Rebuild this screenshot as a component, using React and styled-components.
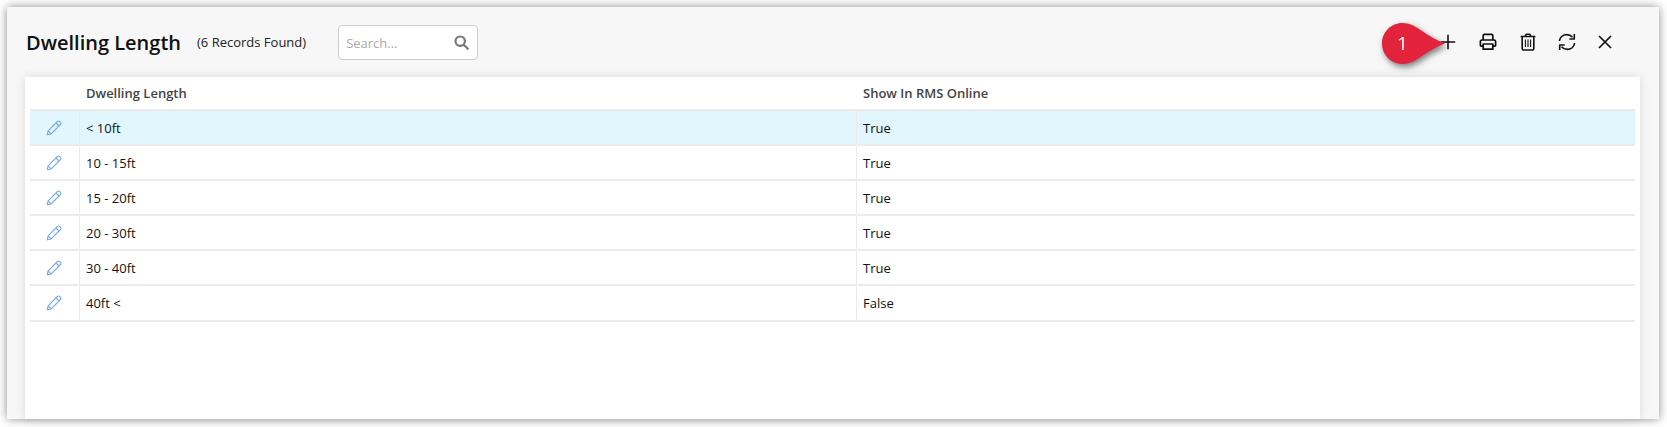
import React from "react";
import styled, { createGlobalStyle } from "styled-components";

const Global = createGlobalStyle`
  html, body { margin: 0; padding: 0; background: #fff; }
  body { font-family: "Open Sans", "Noto Sans", sans-serif; color: #111; overflow: hidden; }
`;
const Page = styled.div`
  width: 1667px; height: 427px; box-sizing: border-box; padding: 7px 8px 8px 7px;
`;
const Panel = styled.div`
  position: relative; height: 100%; background: #f7f7f7;
  box-shadow: 0 0 9px rgba(0,0,0,.45);
  display: flex; flex-direction: column;
`;
const Header = styled.header`
  height: 70px; flex: none; display: flex; align-items: center; padding: 0 36px 0 19px;
`;
const Title = styled.h1`
  margin: 0; font-size: 20px; line-height: 27px; font-weight: 600; color: #111;
`;
const Count = styled.span`
  margin-left: 16px; font-size: 13px; color: #222;
`;
const SearchBox = styled.div`
  margin-left: 32px; margin-top: 1px; width: 140px; height: 35px; box-sizing: border-box;
  background: #fff; border: 1px solid #ccc; border-radius: 4px;
  display: flex; align-items: center; justify-content: space-between; padding: 0 8px 0 7px;
  color: #aaa; font-size: 13px;
`;
const Actions = styled.div`
  margin-left: auto; display: flex; align-items: center;
`;
const IconBtn = styled.button`
  width: ${p => p.$w || 39}px; height: 30px; padding: 0; border: 0; background: none; color: #111;
  display: flex; align-items: center; justify-content: center;
`;
const Card = styled.main`
  flex: 1; margin: 0 19px 0 18px; background: #fff; padding: 0 5px;
  box-shadow: 0 0 10px rgba(0,0,0,.12);
`;
const Row = styled.div`
  display: grid; grid-template-columns: 49px 777px 1fr; height: 35.1px; box-sizing: border-box;
  border-bottom: 2px solid #eee9ea; background: ${p => p.$active ? "#e1f7fd" : "transparent"};
  font-size: 13px; color: #111;
`;
const HeadRow = styled(Row)`
  height: 34px; font-weight: 600; color: #444;
`;
const Cell = styled.div`
  display: flex; align-items: center; padding-left: 6px; border-left: 1px solid ${p => p.$line ? "#eee9ea" : "transparent"};
`;
const EditCell = styled.div`
  display: flex; align-items: center; justify-content: center; padding-right: 1px;
`;
const Marker = styled.div`
  position: absolute; left: 1375px; top: 16px; width: 63px; height: 41px;
  filter: drop-shadow(2px 3px 3px rgba(0,0,0,.5));
  display: flex; align-items: center;
`;
const MarkerNum = styled.span`
  position: absolute; left: 15px; top: 7px; color: #fff; font-size: 19px; line-height: 26px; font-weight: 400;
  font-family: "Open Sans", sans-serif;
`;

const Pencil = () => (
  <svg width="16" height="16" viewBox="0 0 16 16" fill="none" stroke="#7aa9e3" strokeWidth="1.1" strokeLinejoin="round">
    <path d="M1.2 14.8l.9-4L11.4 1.5c.7-.7 1.6-.7 2.2 0l.9.9c.6.6.6 1.5 0 2.1L5.2 13.9z" />
    <path d="M2.1 10.8l3.1 3.1M10 3l3 3" />
  </svg>
);
const Magnifier = () => (
  <svg width="15" height="15" viewBox="0 0 15 15" fill="none" stroke="#777" strokeWidth="2.2">
    <circle cx="6.2" cy="6.2" r="4.7" />
    <path d="M9.8 9.8l4 4" strokeLinecap="round" />
  </svg>
);
const Plus = () => (
  <svg width="16" height="16" viewBox="0 0 16 16" stroke="#111" strokeWidth="1.6"><path d="M8 .8v14.4M.8 8h14.4" /></svg>
);
const Printer = () => (
  <svg width="18" height="18" viewBox="0 0 18 18" fill="none" stroke="#111" strokeWidth="1.7" strokeLinejoin="round">
    <path d="M4.2 7V2.6c0-.6.5-1.2 1.2-1.2h7.2c.7 0 1.2.6 1.2 1.2V7" />
    <path d="M4.2 13.2H2.4c-.6 0-1-.4-1-1V8.6C1.4 7.7 2.1 7 3 7h12c.9 0 1.6.7 1.6 1.6v3.6c0 .6-.4 1-1 1h-1.8" />
    <path d="M4.2 11h9.6v5.2H4.2z" />
  </svg>
);
const Trash = () => (
  <svg width="16" height="18" viewBox="0 0 16 18" fill="none" stroke="#111" strokeWidth="1.6" strokeLinejoin="round">
    <path d="M.6 3.5h14.8M5.2 3.3l.9-2h3.8l.9 2" />
    <path d="M2.2 3.5v12.2c0 .7.5 1.3 1.2 1.3h9.2c.7 0 1.2-.6 1.2-1.3V3.5" />
    <path d="M5.4 6.5v7.6M8 6.5v7.6M10.6 6.5v7.6" strokeWidth="1.1" />
  </svg>
);
const Refresh = () => (
  <svg width="18" height="18" viewBox="0 0 18 18" fill="none" stroke="#111" strokeWidth="1.6" strokeLinejoin="round">
    <path d="M1.4 8C1.9 4.3 5 1.6 8.8 1.6c2.3 0 4.3 1 5.7 2.7" />
    <path d="M16.3 1v5h-5" />
    <path d="M16.6 10c-.5 3.7-3.6 6.4-7.4 6.4-2.3 0-4.3-1-5.7-2.7" />
    <path d="M1.7 17v-5h5" />
  </svg>
);
const Close = () => (
  <svg width="14" height="14" viewBox="0 0 14 14" stroke="#111" strokeWidth="1.7"><path d="M1 1l12 12M13 1L1 13" /></svg>
);

const rows = [
  ["< 10ft", "True"],
  ["10 - 15ft", "True"],
  ["15 - 20ft", "True"],
  ["20 - 30ft", "True"],
  ["30 - 40ft", "True"],
  ["40ft <", "False"],
];

export default function App() {
  return (
    <Page>
      <Global />
      <Panel>
        <Header>
          <Title>Dwelling Length</Title>
          <Count>(6 Records Found)</Count>
          <SearchBox>Search...<Magnifier /></SearchBox>
          <Actions>
            <IconBtn $w={40}><Plus /></IconBtn>
            <IconBtn $w={40}><Printer /></IconBtn>
            <IconBtn $w={39}><Trash /></IconBtn>
            <IconBtn $w={40}><Refresh /></IconBtn>
            <IconBtn $w={36}><Close /></IconBtn>
          </Actions>
        </Header>
        <Card>
          <HeadRow>
            <div />
            <Cell>Dwelling Length</Cell>
            <Cell>Show In RMS Online</Cell>
          </HeadRow>
          {rows.map((r, i) => (
            <Row key={r[0]} $active={i === 0}>
              <EditCell><Pencil /></EditCell>
              <Cell $line>{r[0]}</Cell>
              <Cell $line>{r[1]}</Cell>
            </Row>
          ))}
        </Card>
        <Marker>
          <svg width="63" height="41" viewBox="0 0 63 41">
            <path d="M20.5 0C29 0 34 4 40 8c7 5 14 9 23 12.5-9 3.500-16 7.500-23 12.500-6 4-11 8-19.500 8C9 41 0 32 0 20.500S9 0 20.500 0z" fill="#e3233c" />
          </svg>
          <MarkerNum>1</MarkerNum>
        </Marker>
      </Panel>
    </Page>
  );
}
